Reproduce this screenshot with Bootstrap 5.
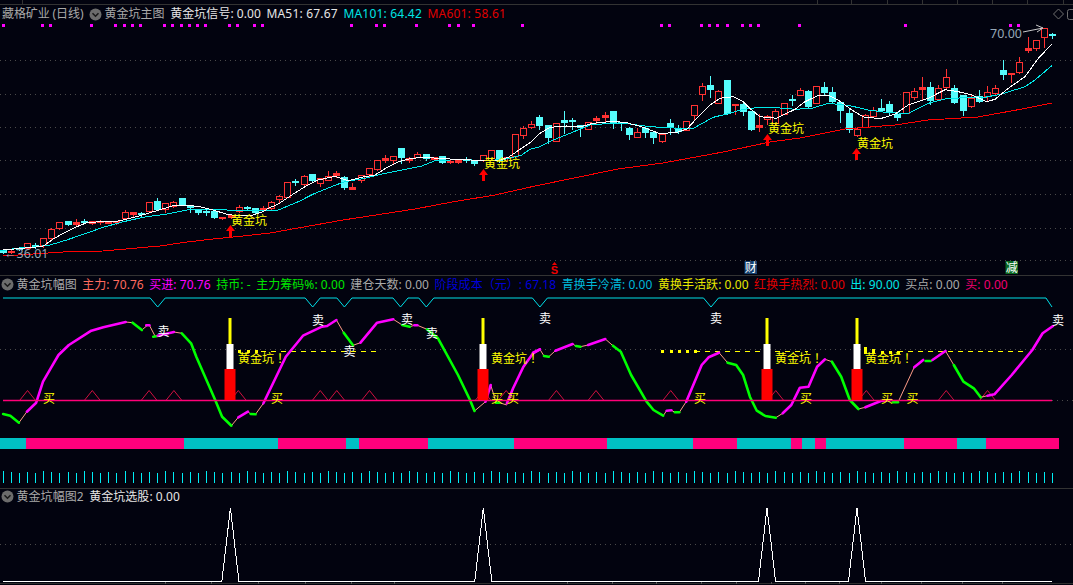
<!DOCTYPE html>
<html lang="zh-CN">
<head>
<meta charset="utf-8">
<title>黄金坑</title>
<link href="https://cdn.jsdelivr.net/npm/bootstrap@5.3.0/dist/css/bootstrap.min.css" rel="stylesheet">
<style>
html,body{margin:0;height:585px;overflow:hidden;background:#02030f;}
.chart-page{width:1073px;height:585px;background:#02030f;color:#b4b4b4;font-family:"Noto Sans","Noto Sans CJK SC",sans-serif;font-size:12px;line-height:14px;}
.top-strip{height:5px;display:block;}
.legend-row{height:18px;white-space:nowrap;column-gap:5.5px;padding-left:1px;letter-spacing:.05px;}
.legend-a{border-top:1px solid #333;height:18px;}
.legend-b{border-top:1px solid #333;height:16px;}
.panel-svg{display:block;width:1073px;}
.chev{width:13px;height:13px;flex:none;margin-right:-3px;}
.first-name{padding-left:1px;letter-spacing:-.1px;}
.wide-lat{letter-spacing:.2px;}
.c-gray{color:#a9a9a9}.c-white{color:#e6e6e6}.c-cyan{color:#00e6e6}.c-red{color:#e00000}
.c-salmon{color:#ff6a5e}.c-mag{color:#ff00ff}.c-green{color:#00e600}.c-blue{color:#0000d8}
.c-teal{color:#00b8d8}.c-yel{color:#e8e800}.c-crim{color:#f00070}
.svg-cjk{font-family:"Noto Sans CJK SC",sans-serif;font-size:12px;}
.svg-num{font-family:"Noto Sans",sans-serif;font-size:12.5px;fill:#96a8b8;}
.lbl-yel{fill:#ffff00}.lbl-white{fill:#fff}
</style>
</head>
<body>
<div class="chart-page d-flex flex-column">
  <svg class="top-strip" id="strip" viewBox="0 0 1073 5" width="1073" height="5"></svg>
  <div class="legend-row d-flex align-items-center">
    <span class="c-gray first-name">藏格矿业 (日线)</span>
    <svg class="chev" viewBox="0 0 13 13"><circle cx="6.5" cy="6.5" r="6" fill="#6c6c6c"/><path d="M3.5 5.2l3 3 3-3" stroke="#1a1a1a" stroke-width="1.6" fill="none"/></svg>
    <span class="c-gray">黄金坑主图</span>
    <span class="c-white">黄金坑信号: 0.00</span>
    <span class="c-white wide-lat">MA51: 67.67</span>
    <span class="c-cyan wide-lat">MA101: 64.42</span>
    <span class="c-red wide-lat">MA601: 58.61</span>
    <svg class="ms-auto" width="29" height="18" viewBox="0 0 29 18"><path d="M9.5 9l5-5 5 5-5 5z" fill="none" stroke="#707070"/><rect x="23.5" y="4.5" width="10" height="10" rx="2" fill="none" stroke="#707070"/></svg>
  </div>
  <svg class="panel-svg" id="p1" viewBox="0 23 1073 252" width="1073" height="252"></svg>
  <div class="legend-row legend-a d-flex align-items-center">
    <svg class="chev" viewBox="0 0 13 13"><circle cx="6.5" cy="6.5" r="6" fill="#6c6c6c"/><path d="M3.5 5.2l3 3 3-3" stroke="#1a1a1a" stroke-width="1.6" fill="none"/></svg>
    <span class="c-gray">黄金坑幅图</span>
    <span class="c-salmon">主力: 70.76</span>
    <span class="c-mag">买进: 70.76</span>
    <span class="c-green">持币: -</span>
    <span class="c-green">主力筹码%: 0.00</span>
    <span class="c-gray">建仓天数: 0.00</span>
    <span class="c-blue">阶段成本（元）: 67.18</span>
    <span class="c-teal">青换手冷清: 0.00</span>
    <span class="c-yel">黄换手活跃: 0.00</span>
    <span class="c-red">红换手热烈: 0.00</span>
    <span class="c-cyan">出: 90.00</span>
    <span class="c-gray">买点: 0.00</span>
    <span class="c-crim">买: 0.00</span>
  </div>
  <svg class="panel-svg" id="p2" viewBox="0 293 1073 195" width="1073" height="195"></svg>
  <div class="legend-row legend-b d-flex align-items-center">
    <svg class="chev" viewBox="0 0 13 13"><circle cx="6.5" cy="6.5" r="6" fill="#6c6c6c"/><path d="M3.5 5.2l3 3 3-3" stroke="#1a1a1a" stroke-width="1.6" fill="none"/></svg>
    <span class="c-gray">黄金坑幅图2</span>
    <span class="c-white">黄金坑选股: 0.00</span>
  </div>
  <svg class="panel-svg" id="p3" viewBox="0 505 1073 80" width="1073" height="80"></svg>
</div>
<script src="https://cdn.jsdelivr.net/npm/bootstrap@5.3.0/dist/js/bootstrap.bundle.min.js"></script>
<script>
(function(){
const Z=2.904;
const RED='#ff3232',CY='#55fcfc',BG='#02030f';
const CR='shape-rendering="crispEdges"';
const crops=[
 {x0:0,y0:165,d:[[9,250,255,260,264,'c'],[33,252,258,262,265,'r'],[57,243,248,251,256,'c'],[82,231,235,250,253,'r'],[105,232,239,241,250,'c'],[130,220,220,240,245,'r'],[154,185,192,218,222,'r'],[178,168,172,188,193,'r'],[204,165,168,177,180,'c'],[229,160,171,176,181,'r'],[253,160,169,171,175,'c'],[277,168,169,173,176,'r'],[301,163,169,172,176,'r'],[325,169,169,173,173,'r'],[349,165,168,172,178,'r'],[376,133,142,158,163,'r'],[400,137,141,146,152,'r'],[424,138,144,146,152,'c'],[448,109,111,137,140,'r'],[472,97,108,132,136,'c'],[496,112,115,131,140,'r'],[520,106,111,122,126,'r'],[547,96,99,117,120,'c'],[571,118,124,126,140,'c'],[595,128,134,140,147,'c'],[619,130,139,141,150,'c'],[643,135,138,155,159,'c'],[667,153,156,160,162,'r'],[692,148,151,155,158,'r'],[716,118,127,137,140,'r'],[741,120,126,127,132,'c'],[766,127,130,140,143,'c'],[790,120,130,132,138,'r']]},
 {x0:265,y0:100,d:[[19,300,307,325,330,'r'],[43,283,289,298,305,'r'],[67,244,247,290,292,'r'],[91,233,243,245,256,'c'],[118,223,229,253,256,'r'],[142,222,223,240,243,'c'],[166,230,233,248,258,'r'],[190,210,229,239,240,'r'],[214,210,220,224,232,'f'],[238,225,232,260,268,'c'],[262,247,261,266,267,'f'],[288,222,226,240,246,'r'],[313,204,205,221,228,'r'],[337,180,181,208,210,'r'],[361,162,175,179,185,'f'],[385,165,169,179,188,'r'],[409,141,144,170,189,'c'],[433,168,173,179,186,'r'],[457,153,163,170,171,'r'],[484,159,163,173,180,'c'],[508,168,171,176,180,'f'],[532,167,169,185,190,'c'],[556,178,183,187,189,'f'],[580,174,180,185,189,'r'],[604,168,177,179,186,'c'],[628,176,179,188,194,'c'],[655,164,166,179,182,'r'],[679,149,151,173,177,'r'],[703,149,151,179,187,'c'],[727,168,170,174,180,'r'],[751,99,103,168,172,'r'],[775,76,85,104,114,'r'],[799,60,73,82,85,'r']]},
 {x0:530,y0:70,d:[[28,132,141,164,177,'c'],[55,163,166,200,218,'c'],[79,160,160,212,212,'r'],[103,120,151,156,190,'c'],[127,141,149,154,178,'c'],[151,162,166,172,197,'c'],[175,156,157,176,176,'r'],[199,135,143,150,158,'f'],[226,123,134,140,152,'f'],[250,122,124,156,173,'c'],[274,155,157,158,180,'c'],[298,168,174,193,207,'c'],[322,170,186,200,201,'r'],[346,165,174,185,200,'c'],[370,180,185,200,218,'c'],[397,188,192,212,215,'r'],[421,144,159,167,191,'c'],[445,162,178,182,188,'c'],[469,153,154,180,180,'r'],[493,105,106,134,150,'r'],[517,37,48,71,90,'r'],[541,15,45,56,80,'c'],[565,58,64,98,100,'r'],[592,28,31,129,131,'c'],[616,98,101,106,132,'f'],[640,90,102,122,136,'c'],[664,120,123,177,180,'c'],[688,130,165,170,183,'f'],[712,133,139,147,162,'r'],[736,115,124,160,162,'r'],[763,100,100,131,131,'r'],[787,72,87,89,105,'c']]},
 {x0:795,y0:20,d:[[16,201,211,224,226,'r'],[40,208,213,258,263,'c'],[64,198,198,248,250,'r'],[88,183,201,217,222,'c'],[112,198,216,243,247,'c'],[136,245,247,270,305,'c'],[163,265,279,327,335,'c'],[187,322,327,344,348,'r'],[211,278,284,320,322,'r'],[235,258,271,287,292,'r'],[259,235,264,271,272,'c'],[283,240,252,276,284,'c'],[307,273,281,290,300,'c'],[334,212,217,279,280,'r'],[358,201,214,231,238,'r'],[382,168,202,206,240,'f'],[406,183,201,239,251,'c'],[430,193,205,236,238,'r'],[454,144,172,201,203,'r'],[478,193,204,246,248,'c'],[505,224,226,270,285,'c'],[529,222,234,258,262,'r'],[553,206,228,242,246,'c'],[577,194,217,229,240,'r'],[601,192,205,218,222,'r'],[625,118,150,161,177,'c'],[649,156,158,162,186,'f'],[673,108,127,156,160,'r'],[700,48,85,90,95,'f'],[724,60,61,83,90,'r'],[748,25,25,50,82,'r'],[772,35,43,45,53,'c']]}
];
const C=(pts,x0,y0,sx=3)=>pts.map(p=>[x0+p[0]/sx,y0+p[1]/3]);
const toS=a=>a.map(p=>p[0].toFixed(1)+','+p[1].toFixed(1)).join(' ');
const pl=(a,col,w,extra='')=>`<polyline points="${toS(a)}" fill="none" stroke="${col}" stroke-width="${w}" ${extra}/>`;
let s='',xs=[];
const dots=(y,x1=0,x2=1073)=>`<line x1="${x1}" x2="${x2}" y1="${y+.5}" y2="${y+.5}" stroke="#4a4a4a" stroke-dasharray="1 4"/>`;
[60,94,127,160,194,228,260].forEach(y=>s+=dots(y));
[8,123,146,265,335,361,384,407,477,500,526,550,573,596,666,689,739,762,1020,1093,1116,1209,1305,1329,1375,1517].forEach(z=>s+=`<rect x="${Math.round(z/Z)-1}" y="24" width="3" height="3" fill="#ff00ff"/>`);
[373,396,489,512,535,562,608,631,654,773,1081,1386,1409].forEach(z=>s+=`<rect x="${Math.round(533+z/Z)-1}" y="24" width="3" height="3" fill="#ff00ff"/>`);
crops.forEach(c=>c.d.forEach(k=>{
 const cx=Math.round(c.x0+k[0]/3)+.5;xs.push(cx);
 const Y=v=>Math.round(c.y0+v/3)+.5;
 const col=k[5]==='c'?CY:RED;
 s+=`<line x1="${cx}" x2="${cx}" y1="${Y(k[1])}" y2="${Y(k[4])}" stroke="${col}" ${CR}/>`;
 let t=Y(k[2]),b=Y(k[3]);if(b-t<1)b=t;
 if(k[5]==='r'&&b-t>2)s+=`<rect x="${cx-3}" y="${t}" width="6" height="${b-t}" fill="${BG}" stroke="${RED}" ${CR}/>`;
 else s+=`<rect x="${cx-3.5}" y="${t-.5}" width="7" height="${Math.max(b-t+1,1.5)}" fill="${col}" ${CR}/>`;
}));
const white=[...C([[9,255],[100,247],[130,243],[160,222],[190,205],[230,185],[260,173],[300,170],[340,171],[370,165],[420,152],[470,137],[520,122],[555,120],[600,125],[640,135],[680,148],[720,153],[760,150],[790,140]],0,165),...C([[10,325],[40,312],[80,285],[120,260],[160,240],[210,229],[250,242],[290,232],[330,225],[370,200],[400,185],[440,175],[480,172],[520,175],[570,178],[640,181],[700,181],[730,172],[770,145]],265,100),...C([[0,218],[30,190],[60,172],[110,168],[150,170],[190,160],[250,154],[290,158],[340,172],[390,191],[440,187],[470,178],[500,145],[540,105],[570,85],[610,80],[640,95],[665,120],[690,140],[740,145],[770,130]],530,70),...C([[0,268],[30,245],[70,226],[100,226],[130,240],[170,270],[210,293],[260,295],[300,282],[340,255],[400,235],[450,209],[490,215],[530,225],[575,245],[600,238],[640,205],[690,170],[730,115],[770,73]],795,20)];
const cyan=[...C([[0,258],[50,250],[100,246],[150,240],[200,225],[250,208],[310,187],[370,170],[430,157],[500,147],[560,135],[620,132],[700,136],[780,138]],0,165),...C([[40,330],[100,305],[150,280],[210,256],[240,245],[300,235],[350,222],[400,212],[470,198],[510,182],[600,178],[650,183],[720,178],[770,165]],265,100),...C([[0,238],[30,230],[70,210],[120,190],[180,165],[240,160],[300,162],[360,170],[450,175],[490,175],[550,142],[590,132],[640,118],[680,113],[740,113]],530,70),...C([[0,268],[50,265],[100,250],[160,256],[220,270],[280,278],[340,280],[400,250],[450,237],[520,232],[570,232],[620,222],[690,200],[720,180],[770,137]],795,20)];
const red=[[3,256],[33,254],[63,252],[103,251],[137,248],[160,246],[187,242],[213,239],[243,236],[270,233],[343,220],[415,209],[452,202],[495,195],[535,186],[618,169],[663,163],[723,152],[770,142],[800,138],[845,129],[895,125],[928,120],[978,117],[1022,109],[1052,103]];
s+=pl(red,'#ff0000',1,CR);
s+=pl(cyan,'#00eaea',1,CR);
s+=pl(white,'#ffffff',1,CR);
[[231,237,214],[484,181,157],[768,146,122],[857,160,137]].forEach(a=>{
 const x=a[0],b=a[1];
 s+=`<path d="M${x-.5} ${b-12}l-4.5 6h3v6h3v-6h3z" fill="#ff0000"/>`;
 s+=`<text class="svg-cjk lbl-yel" x="${x}" y="${a[2]+11}">黄金坑</text>`;
});
s+=`<text class="svg-num" x="990" y="38">70.00</text><path d="M1023 32l20-4M1036 25l7 3-6 4" fill="none" stroke="#c8c8c8"/>`;
s+=`<text class="svg-num" x="4" y="258">←36.01</text>`;
s+=`<path d="M554.5 262l-2.5 3h5z" fill="#f00000"/><text x="554.5" y="274" text-anchor="middle" font-family="Liberation Sans" font-weight="700" font-size="11" fill="#f00000">S</text>`;
s+=`<rect x="744.5" y="261" width="12.5" height="13" fill="#14406e"/><text class="svg-cjk lbl-white" x="750.7" y="272" text-anchor="middle">财</text>`;
s+=`<rect x="1005.5" y="261" width="12.5" height="13" fill="#0b6a22"/><text class="svg-cjk lbl-white" x="1011.7" y="272" text-anchor="middle">减</text>`;
document.getElementById('p1').innerHTML=s;
let st='<line x1="0" x2="1073" y1="4.5" y2="4.5" stroke="#333"/>';
[22,817,851,887,922,957,992,1027,1063].forEach(x=>st+=`<line x1="${x+.5}" x2="${x+.5}" y1="0" y2="4" stroke="#333"/>`);
document.getElementById('strip').innerHTML=st;
let h='';
h+=dots(349)+dots(400,1052,1073);
let notch=[[3,298]];
[458/Z,908/Z,1000/Z,1163/Z,1238/Z,533+20/Z,533+517/Z].forEach(v=>{notch.push([v-7.5,298],[v,307],[v+7.5,298]);});
notch.push([1046,298],[1052,307]);
h+=pl(notch,'#00e0e8',1);
[80,268,433,505,692,930,978,1073,1403,1470].map(z=>z/Z).concat([68,183,400,705,968,1200,1320].map(z=>533+z/Z)).forEach(x=>{
 h+=`<path d="M${x-8} 400.5L${x} 390.5L${x+8} 400.5" fill="none" stroke="#d01040"/>`;
});
h+=`<line x1="261" x2="379" y1="351.5" y2="351.5" stroke="#ffff00" stroke-dasharray="5 5"/>`;
[238,247,255].forEach(x=>h+=`<rect x="${x}" y="350" width="3" height="3" fill="#ffff00"/>`);
h+=`<line x1="695" x2="808" y1="351.5" y2="351.5" stroke="#ffff00" stroke-dasharray="5 5"/>`;
[661,670,678,686,694].forEach(x=>h+=`<rect x="${x}" y="350" width="3" height="3" fill="#ffff00"/>`);
h+=`<line x1="898" x2="1025" y1="351.5" y2="351.5" stroke="#ffff00" stroke-dasharray="5 5"/>`;
[864,872,881,889,897].forEach((x,i)=>h+=`<rect x="${x}" y="${347+Math.min(i*2,4)}" width="3" height="${7-Math.min(i*2,4)}" fill="#ffff00"/>`);
const M='#ff00ff',G='#00ff00',T='#ff9c88';
const segA=[[G,[[9,432],[30,437],[55,458]]],[T,[[55,458],[78,425]]],[M,[[78,425],[105,398],[125,335],[150,290],[170,255],[200,225],[265,182],[300,172],[365,156]]],[T,[[365,156],[385,158]]],[G,[[385,158],[412,180]]],[T,[[412,180],[428,166]]],[M,[[425,166],[434,166]]],[T,[[434,166],[450,198]]],[G,[[445,200],[458,198]]],[M,[[458,197],[505,186]]],[T,[[505,186],[528,190]]],[G,[[528,190],[555,220],[570,260],[625,390],[645,440],[672,467]]],[T,[[672,467],[692,442]]],[M,[[692,442],[720,425]]],[T,[[720,425],[728,432]]],[G,[[728,432],[742,433]]],[T,[[742,433],[765,400]]],[M,[[765,400],[830,260],[880,197],[935,170],[950,168],[977,150]]],[T,[[977,150],[998,188]]],[G,[[998,188],[1025,226]]],[T,[[1025,226],[1047,218]]],[M,[[1047,218],[1095,158],[1142,148]]],[T,[[1142,148],[1168,165]]],[G,[[1168,165],[1190,170]]],[T,[[1190,170],[1203,166]]],[M,[[1203,166],[1212,166]]],[T,[[1212,166],[1240,178]]],[G,[[1240,178],[1272,205],[1330,315],[1365,390],[1378,423]]],[T,[[1378,423],[1410,395]]],[M,[[1410,395],[1425,345]]],[T,[[1425,345],[1440,395]]],[G,[[1440,398],[1450,398]]],[T,[[1450,398],[1472,405]]],[M,[[1472,400],[1490,355],[1520,290],[1548,250],[1568,238]]]];
const segB=[[M,[[0,278],[20,268]]],[T,[[20,268],[32,288]]],[G,[[32,288],[46,290]]],[T,[[46,290],[65,272]]],[M,[[65,272],[115,252]]],[T,[[115,252],[125,258]]],[G,[[125,258],[138,260]]],[T,[[138,260],[160,255]]],[M,[[160,255],[210,237]]],[T,[[210,237],[232,257]]],[G,[[232,257],[255,275],[285,345],[330,425],[350,450],[378,467]]],[T,[[378,467],[388,452]]],[M,[[388,452],[402,451]]],[T,[[402,451],[412,457]]],[G,[[412,457],[425,457]]],[T,[[425,457],[445,425]]],[M,[[445,425],[490,315],[510,292],[540,278]]],[T,[[540,278],[565,308]]],[G,[[565,308],[590,315],[610,345],[630,410],[650,452],[675,468],[705,473]]],[T,[[705,473],[725,460]]],[M,[[725,460],[750,435],[775,383],[800,380],[825,320],[848,298]]],[T,[[848,298],[868,305]]],[G,[[868,305],[895,350],[920,420],[945,447]]],[T,[[945,447],[965,442]]],[M,[[965,442],[1010,423],[1040,420]]],[G,[[1045,427],[1060,427]]],[T,[[1060,427],[1107,322]]],[M,[[1107,322],[1133,300]]],[G,[[1140,303],[1155,303]]],[M,[[1160,300],[1198,273]]],[T,[[1198,273],[1222,315]]],[G,[[1222,315],[1250,365],[1280,385],[1300,412]]],[T,[[1300,412],[1320,407]]],[M,[[1320,407],[1340,403],[1390,345],[1450,270],[1480,220],[1510,198]]]];
const drawSeg=(c,a,x0,y0)=>{const w=c===T?1:2.6;return pl(C(a,x0,y0,Z),c,w,c===T?'':'stroke-linecap="round" stroke-linejoin="round"');};
segA.filter(q=>q[0]===T).forEach(q=>h+=drawSeg(q[0],q[1],0,270));
segB.filter(q=>q[0]===T).forEach(q=>h+=drawSeg(q[0],q[1],533,260));
segA.filter(q=>q[0]!==T).forEach(q=>h+=drawSeg(q[0],q[1],0,270));
segB.filter(q=>q[0]!==T).forEach(q=>h+=drawSeg(q[0],q[1],533,260));
h+=`<line x1="3" x2="1052" y1="400.5" y2="400.5" stroke="#ff0078" stroke-width="1.5"/>`;
[230.4,483.3,767,857].forEach(x=>{
 const c=Math.round(x);
 h+=`<rect x="${c-5.5}" y="369" width="11" height="31" fill="#ff0000"/><rect x="${c-3.5}" y="344" width="7" height="25" fill="#ffffff"/><rect x="${c-1.5}" y="318" width="3" height="26" fill="#ffff00"/>`;
});
[238,491,775,865].forEach(x=>h+=`<text class="svg-cjk lbl-yel" x="${x}" y="363">黄金坑<tspan dx="3">！</tspan></text>`);
[[49,399],[277,399],[497,399],[513,399],[700,399],[806,399],[887,399],[912.5,399]].forEach(p=>h+=`<text class="svg-cjk lbl-yel" x="${p[0]}" y="${p[1]+4}" text-anchor="middle">买</text>`);
[[163.6,332],[318,321],[349.5,352],[407,320],[432,334],[545,319],[716,319],[1058,321]].forEach(p=>h+=`<text class="svg-cjk lbl-white" x="${p[0]}" y="${p[1]+4}" text-anchor="middle">卖</text>`);
[[0,26,1],[26,184,0],[184,278,1],[278,346,0],[346,359,1],[359,428,0],[428,514,1],[514,607,0],[607,693,1],[693,737,0],[737,791,1],[791,802,0],[802,815,1],[815,826,0],[826,904,1],[904,957,0],[957,986,1],[986,1059,0]].forEach(b=>h+=`<rect x="${b[0]}" y="438" width="${b[1]-b[0]}" height="11" fill="${b[2]?'#00c0c4':'#ff007c'}"/>`);
xs.forEach((x,i)=>{const t=471+((i*7)%5)*.6;h+=`<line x1="${x}" x2="${x}" y1="${t.toFixed(0)}" y2="483" stroke="#00eef4" ${CR}/>`;});
document.getElementById('p2').innerHTML=h;
let g=dots(545);
let line=[[3,582]];
[230.4,483.3,767,857].forEach(x=>{line.push([x-8.5,582],[x,509],[x+8.5,582]);});
line.push([1052,582]);
g+=pl(line,'#fff',1,CR);
g+=`<line x1="0" x2="1073" y1="584.5" y2="584.5" stroke="#2e2e2e"/>`;
[478,614,750,885,1020,1145].map(z=>z/Z).concat([100,230,358,488,590,690,790,890,1010,1128,1245,1362].map(z=>533+z/Z)).forEach(x=>g+=`<line x1="${x.toFixed(0)}.5" x2="${x.toFixed(0)}.5" y1="583" y2="585" stroke="#555"/>`);
document.getElementById('p3').innerHTML=g;
})();
</script>
</body>
</html>
